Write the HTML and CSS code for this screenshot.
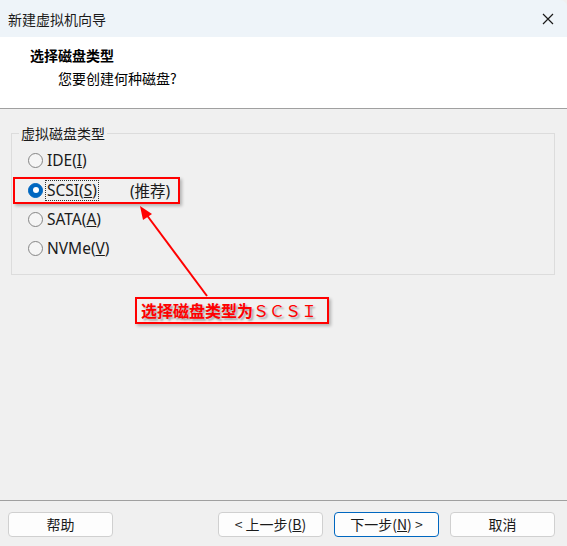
FILE: index.html
```html
<!DOCTYPE html>
<html lang="zh-CN">
<head>
<meta charset="utf-8">
<title>新建虚拟机向导</title>
<link rel="stylesheet" href="styles.css">
</head>
<body>
<div class="window">
  <div class="titlebar">
    <span class="title">新建虚拟机向导</span>
    <svg class="close" width="12" height="12" viewBox="0 0 12 12"><path d="M1 1 L11 11 M11 1 L1 11" stroke="#1a1a1a" stroke-width="1.2" fill="none"/></svg>
  </div>
  <div class="header">
    <div class="h-title">选择磁盘类型</div>
    <div class="h-sub">您要创建何种磁盘?</div>
  </div>
  <div class="main">
    <fieldset class="group">
      <legend>虚拟磁盘类型</legend>
      <div class="row"><span class="radio"></span><span class="label">IDE(<u>I</u>)</span></div>
      <div class="row"><span class="radio checked"></span><span class="label focus">SCSI(<u>S</u>)</span><span class="rec">(推荐)</span></div>
      <div class="row"><span class="radio"></span><span class="label">SATA(<u>A</u>)</span></div>
      <div class="row"><span class="radio"></span><span class="label">NVMe(<u>V</u>)</span></div>
    </fieldset>
  </div>
  <div class="footer">
    <button class="btn">帮助</button>
    <div class="spacer"></div>
    <button class="btn">&lt; 上一步(<u>B</u>)</button>
    <button class="btn primary">下一步(<u>N</u>) &gt;</button>
    <button class="btn">取消</button>
  </div>

  <div class="mark-box"></div>
  <svg class="arrow" width="567" height="546" viewBox="0 0 567 546">
    <line x1="207" y1="296" x2="146" y2="214" stroke="#ff0000" stroke-width="2"/>
    <polygon points="140,206 152,214 143,220" fill="#ff0000"/>
  </svg>
  <div class="note">选择磁盘类型为<span class="fw">ＳＣＳＩ</span></div>
</div>
</body>
</html>
```
FILE: styles.css
```css
* { box-sizing: border-box; }
html, body { margin: 0; padding: 0; }
body {
  width: 567px;
  height: 546px;
  overflow: hidden;
  font-family: "Noto Sans CJK SC", "Noto Sans", sans-serif;
  font-size: 14px;
  color: #000;
  background: #f0f0f0;
}
.window {
  position: relative;
  width: 567px;
  height: 546px;
  display: flex;
  flex-direction: column;
  background: #f0f0f0;
}
.titlebar {
  height: 37px;
  flex: none;
  background: #eef4f9;
  display: flex;
  align-items: center;
  justify-content: space-between;
  padding: 0 13px 0 8px;
  border-top-right-radius: 7px;
}
.title { font-size: 14px; line-height: 18px; color: #1a1a1a; }
.close { display: block; }
.header {
  height: 72px;
  flex: none;
  background: #fff;
  border-bottom: 1px solid #a0a0a0;
  padding: 6px 0 0 30px;
}
.h-title { font-weight: bold; line-height: 22px; margin-top: 1px; }
.h-sub { line-height: 20px; margin-left: 28px; margin-top: 2px; }
.main {
  flex: 1;
  padding: 15px 12px 0 11px;
  border-bottom: 1px solid #a0a0a0;
}
.group {
  margin: 0;
  border: 1px solid #dcdcdc;
  padding: 4px 0 10px 16px;
}
.group legend {
  padding: 0 2px;
  margin-left: -9px;
  line-height: 18px;
  color: #1a1a1a;
}
.row {
  height: 29.4px;
  display: flex;
  align-items: center;
  font-family: "Noto Sans", "Noto Sans CJK SC", sans-serif;
  font-size: 15.5px;
  color: #1a1a1a;
}
.radio {
  width: 15px;
  height: 15px;
  border-radius: 50%;
  border: 1px solid #858585;
  background: #f5f5f5;
  margin-right: 3px;
  flex: none;
  position: relative;
}
.radio.checked {
  background: #0067c0;
  border-color: #0067c0;
}
.radio.checked::after {
  content: "";
  position: absolute;
  left: 3.5px;
  top: 3.5px;
  width: 6px;
  height: 6px;
  border-radius: 50%;
  background: #fff;
}
.label { line-height: 19px; padding: 0 1px; }
.label.focus { outline: 1px dotted #333; outline-offset: 0; }
.rec { margin-left: 32px; }
.footer {
  height: 45px;
  flex: none;
  display: flex;
  align-items: flex-start;
  padding: 11px 12px 0 8px;
  gap: 11px;
}
.spacer { flex: 1; }
.btn {
  width: 105px;
  height: 25px;
  background: #fdfdfd;
  border: 1px solid #d0d0d0;
  border-radius: 4px;
  font-family: inherit;
  font-size: 14px;
  color: #1a1a1a;
  padding: 0;
  line-height: 21px;
}
.btn.primary { border-color: #0067c0; }
.mark-box {
  position: absolute;
  left: 13px;
  top: 177px;
  width: 167px;
  height: 27px;
  border: 2px solid #ff0000;
  box-shadow: 2px 2px 3px rgba(0,0,0,0.25);
}
.arrow {
  position: absolute;
  left: 0;
  top: 0;
  pointer-events: none;
}
.note {
  position: absolute;
  left: 135px;
  top: 297px;
  width: 194px;
  height: 27px;
  border: 2px solid #ff0000;
  box-shadow: 2px 2px 3px rgba(0,0,0,0.25);
  color: #ff0000;
  font-weight: bold;
  font-size: 16px;
  line-height: 22px;
  padding-left: 4px;
  white-space: nowrap;
  text-shadow: 2px 2px 2px rgba(0,0,0,0.3);
  background: #f0f0f0;
}
.note .fw { font-weight: normal; }
```
